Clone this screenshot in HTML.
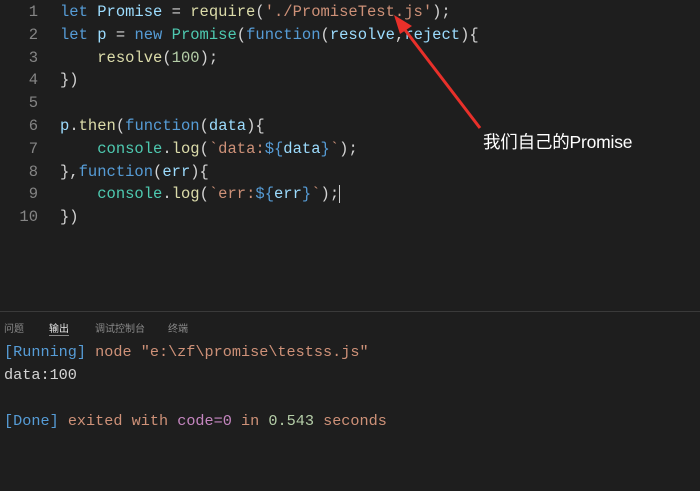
<!DOCTYPE html><html><head><style>
body{margin:0;width:700px;height:491px;background:#1e1e1e;overflow:hidden;position:relative;font-family:"Liberation Mono",monospace}
.ln{position:absolute;left:0;width:38px;text-align:right;color:#858585;font-size:15.5px}
.cd{position:absolute;left:60px;font-size:15.5px;color:#d4d4d4;white-space:pre}
.k{color:#569cd6}.v{color:#9cdcfe}.f{color:#dcdcaa}.s{color:#ce9178}.n{color:#b5cea8}.t{color:#4ec9b0}
.o{position:absolute;left:4px;font-size:15.2px;white-space:pre;color:#d4d4d4}
</style></head><body>
<div style="position:absolute;left:0;top:1px">
<div class="ln" style="top:2px">1</div><div class="ln" style="top:25px">2</div><div class="ln" style="top:48px">3</div><div class="ln" style="top:70px">4</div><div class="ln" style="top:93px">5</div><div class="ln" style="top:116px">6</div><div class="ln" style="top:139px">7</div><div class="ln" style="top:162px">8</div><div class="ln" style="top:184px">9</div><div class="ln" style="top:207px">10</div>
</div>
<div style="position:absolute;left:0;top:1px;width:700px;height:240px">
<div class="cd" style="top:2px"><span class="k">let</span> <span class="v">Promise</span> = <span class="f">require</span>(<span class="s">'./PromiseTest.js'</span>);</div>
<div class="cd" style="top:25px"><span class="k">let</span> <span class="v">p</span> = <span class="k">new</span> <span class="t">Promise</span>(<span class="k">function</span>(<span class="v">resolve</span>,<span class="v">reject</span>){</div>
<div class="cd" style="top:48px">    <span class="f">resolve</span>(<span class="n">100</span>);</div>
<div class="cd" style="top:70px">})</div>
<div class="cd" style="top:116px"><span class="v">p</span>.<span class="f">then</span>(<span class="k">function</span>(<span class="v">data</span>){</div>
<div class="cd" style="top:139px">    <span class="t">console</span>.<span class="f">log</span>(<span class="s">`data:</span><span class="k">${</span><span class="v">data</span><span class="k">}</span><span class="s">`</span>);</div>
<div class="cd" style="top:162px">},<span class="k">function</span>(<span class="v">err</span>){</div>
<div class="cd" style="top:184px">    <span class="t">console</span>.<span class="f">log</span>(<span class="s">`err:</span><span class="k">${</span><span class="v">err</span><span class="k">}</span><span class="s">`</span>);<span style="border-left:1px solid #ccc"></span></div>
<div class="cd" style="top:207px">})</div>
</div>
<svg style="position:absolute;left:0;top:0" width="700" height="491"><line x1="480" y1="128" x2="402" y2="26" stroke="#e8302a" stroke-width="3"/><polygon points="394,15 412,26 400,34" fill="#e8302a"/></svg>
<div style="position:absolute;left:483px;top:129px;color:#fff;font-size:17.5px;letter-spacing:-0.2px;font-family:'Liberation Sans','Noto Sans CJK SC',sans-serif">我们自己的Promise</div>
<div style="position:absolute;left:0;top:311px;width:700px;height:1px;background:#3a3a3a"></div>
<div style="position:absolute;top:320px;left:4px;font-size:10px;color:#888;font-family:'Noto Sans CJK SC',sans-serif">问题</div>
<div style="position:absolute;top:320px;left:49px;font-size:10px;color:#e7e7e7;font-family:'Noto Sans CJK SC',sans-serif;border-bottom:1px solid #888">输出</div>
<div style="position:absolute;top:320px;left:95px;font-size:10px;color:#888;font-family:'Noto Sans CJK SC',sans-serif">调试控制台</div>
<div style="position:absolute;top:320px;left:168px;font-size:10px;color:#888;font-family:'Noto Sans CJK SC',sans-serif">终端</div>
<div class="o" style="top:343px"><span style="color:#569cd6">[Running]</span> <span class="s">node "e:\zf\promise\testss.js"</span></div>
<div class="o" style="top:366px">data:100</div>
<div class="o" style="top:412px"><span style="color:#569cd6">[Done]</span> <span class="s">exited with</span> <span style="color:#c586c0">code=0</span> <span class="s">in</span> <span class="n">0.543</span> <span class="s">seconds</span></div>
</body></html>
